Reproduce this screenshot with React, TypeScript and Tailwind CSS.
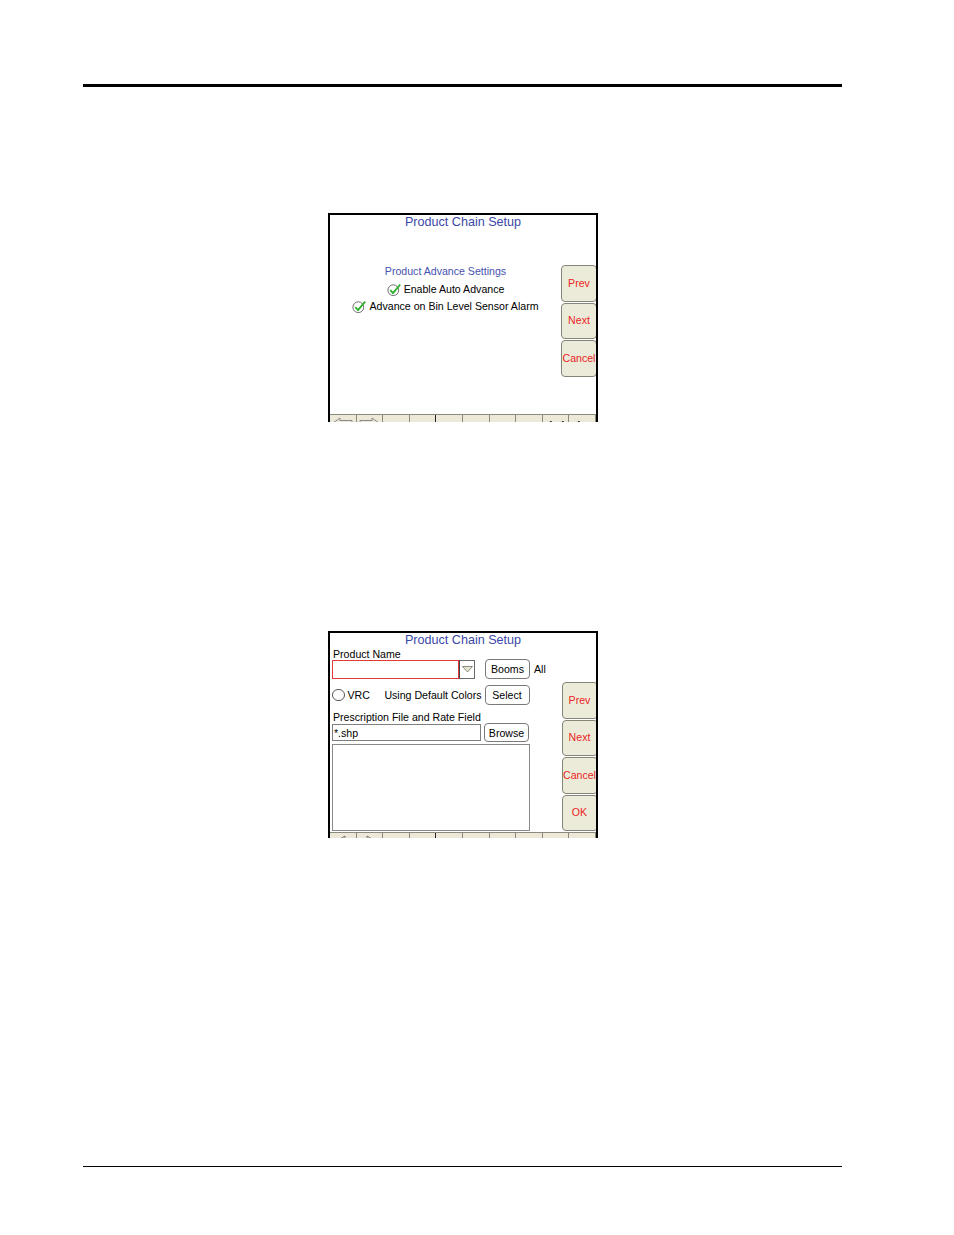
import React from "react";

const font = "font-['Liberation_Sans',Arial,sans-serif]";

const CheckIcon = () => (
  <svg width="15" height="13" viewBox="0 0 15 13" className="shrink-0">
    <circle cx="6.3" cy="7.2" r="5.4" fill="white" stroke="#6f6f6f" strokeWidth="1" />
    <path d="M3.3 7 L6 10.2 L13.2 1.5" fill="none" stroke="#2fb12f" strokeWidth="1.9" strokeLinejoin="round" />
  </svg>
);

const SideButton = ({ label }: { label: string }) => (
  <div className="flex h-[36.5px] w-[36px] shrink-0 items-center justify-center whitespace-nowrap rounded-[4px] border border-[#85857a] bg-[#ecebd9] text-[10.6px] leading-none text-[#ea2424]">
    {label}
  </div>
);

const WhiteButton = ({ label, h }: { label: string; h: string }) => (
  <div
    className={
      "flex w-[45px] shrink-0 items-center justify-center rounded-[4px] border border-[#7a7a7a] bg-white text-[10.6px] leading-none text-black " +
      h
    }
  >
    {label}
  </div>
);

const ArrowLeft = () => (
  <svg width="22" height="12" viewBox="0 0 22 12">
    <path d="M1 6 L8 1 L8 3.5 L20 3.5 L20 8.5 L8 8.5 L8 11 Z" fill="none" stroke="#8a8a8a" strokeWidth="1" />
  </svg>
);

const ArrowRight = () => (
  <svg width="22" height="12" viewBox="0 0 22 12">
    <path d="M21 6 L14 1 L14 3.5 L2 3.5 L2 8.5 L14 8.5 L14 11 Z" fill="none" stroke="#8a8a8a" strokeWidth="1" />
  </svg>
);

const Tick = () => (
  <svg width="4" height="6" viewBox="0 0 4 6">
    <path d="M0.5 3 L3 0.5 L3 6" fill="none" stroke="#111" strokeWidth="1.4" />
  </svg>
);

const TriLeft = () => (
  <svg width="7" height="8" viewBox="0 0 7 8">
    <path d="M1 4 L6 1 L6 7 Z" fill="none" stroke="#777" strokeWidth="1" />
  </svg>
);

const TriRight = () => (
  <svg width="7" height="8" viewBox="0 0 7 8">
    <path d="M6 4 L1 1 L1 7 Z" fill="none" stroke="#777" strokeWidth="1" />
  </svg>
);

function Toolbar({ first }: { first: boolean }) {
  const cells = Array.from({ length: 10 });
  return (
    <div className="grid h-[20px] shrink-0 grid-cols-10 border-t border-[#8a8a7e] bg-[#ece9d8]">
      {cells.map((_, i) => (
        <div
          key={i}
          className={
            i === 3
              ? "flex justify-center border-r border-[#222222] pt-[2px]"
              : "flex justify-center border-r border-[#8a8a7e] pt-[2px]"
          }
        >
          {first && i === 0 && <ArrowLeft />}
          {first && i === 1 && <ArrowRight />}
          {first && i === 8 && (
            <div className="flex gap-[8px] pt-[4px]">
              <Tick />
              <Tick />
            </div>
          )}
          {first && i === 9 && (
            <div className="pt-[4px] pr-[8px]">
              <Tick />
            </div>
          )}
          {!first && i === 0 && <TriLeft />}
          {!first && i === 1 && <TriRight />}
        </div>
      ))}
    </div>
  );
}

const Title = () => (
  <div className="shrink-0 pt-px text-center text-[12.6px] leading-[12px] text-[#3b47a6]">Product Chain Setup</div>
);

function ScreenOne() {
  return (
    <div className="flex h-[209px] w-[270px] flex-col overflow-hidden border-2 border-b-0 border-black bg-white">
      <Title />
      <div className="flex h-[186px] shrink-0">
        <div className="flex flex-1 flex-col items-center pt-[35px] text-[10.6px] leading-[17.5px] text-black">
          <div className="text-[#4652b0]">Product Advance Settings</div>
          <div className="flex items-center gap-[2px]">
            <CheckIcon />
            <span>Enable Auto Advance</span>
          </div>
          <div className="flex items-center gap-[2px]">
            <CheckIcon />
            <span>Advance on Bin Level Sensor Alarm</span>
          </div>
        </div>
        <div className="-mr-px flex w-[36px] flex-col gap-[1px] pt-[37px]">
          <SideButton label="Prev" />
          <SideButton label="Next" />
          <SideButton label="Cancel" />
        </div>
      </div>
      <Toolbar first />
    </div>
  );
}

function ScreenTwo() {
  return (
    <div className="flex h-[207px] w-[270px] flex-col overflow-hidden border-2 border-b-0 border-black bg-white">
      <Title />
      <div className="flex h-[186px] shrink-0">
        <div className="flex flex-1 flex-col pl-[2px] text-[10.6px] text-black">
          <div className="pl-[1px] pt-[2px] leading-[12px]">Product Name</div>
          <div className="-mt-px flex h-[20px] items-center">
            <div className="flex h-[19px] w-[143px]">
              <div className="flex-1 border border-[#e23a3a] bg-white" />
              <div className="flex w-[16px] items-center justify-center border border-l-[#444] border-[#6b6b6b] bg-white">
                <svg width="11" height="7" viewBox="0 0 11 7">
                  <path d="M0.5 0.5 L10.5 0.5 L5.5 6 Z" fill="#e6e6d2" stroke="#8a8a80" strokeWidth="1" />
                </svg>
              </div>
            </div>
            <div className="ml-[10px]">
              <WhiteButton label="Booms" h="h-[20px]" />
            </div>
            <span className="ml-[4px] leading-none">All</span>
          </div>
          <div className="mt-[6px] flex h-[20px] items-center">
            <div className="h-[12.5px] w-[12.5px] shrink-0 rounded-full border border-[#555] bg-white" />
            <span className="ml-[3px] leading-none">VRC</span>
            <span className="ml-[14.5px] leading-none">Using Default Colors</span>
            <div className="ml-[3px]">
              <WhiteButton label="Select" h="h-[20px]" />
            </div>
          </div>
          <div className="mt-[6.3px] pl-[1px] leading-[12px]">Prescription File and Rate Field</div>
          <div className="flex h-[19px] items-center">
            <div className="flex h-[17px] w-[149px] items-center border border-[#7f7f7f] bg-white pl-[1px] leading-none">
              *.shp
            </div>
            <div className="ml-[3px]">
              <WhiteButton label="Browse" h="h-[19px]" />
            </div>
          </div>
          <div className="mt-[2px] h-[87px] w-[198px] border border-[#8a8a8a] bg-white" />
        </div>
        <div className="-mr-[1.5px] flex w-[36px] flex-col gap-[1px] pt-[36px]">
          <SideButton label="Prev" />
          <SideButton label="Next" />
          <SideButton label="Cancel" />
          <SideButton label="OK" />
        </div>
      </div>
      <Toolbar first={false} />
    </div>
  );
}

export default function App() {
  return (
    <div className={"min-h-[1235px] w-[954px] bg-white " + font}>
      <div className="pt-[84px] pl-[83px]">
        <div className="h-[3px] w-[759px] bg-black" />
      </div>
      <div className="mt-[126px] pl-[328px]">
        <ScreenOne />
      </div>
      <div className="mt-[209px] pl-[328px]">
        <ScreenTwo />
      </div>
      <div className="mt-[328px] pl-[83px]">
        <div className="h-px w-[759px] bg-black" />
      </div>
    </div>
  );
}
